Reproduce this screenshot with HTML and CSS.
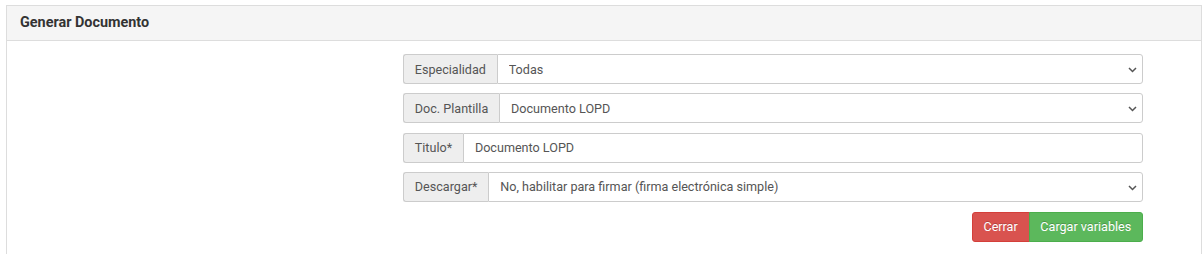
FILE: index.html
```html
<!DOCTYPE html>
<html lang="es">
<head>
    <meta charset="UTF-8">
    <title>Generar Documento</title>
    <link rel="stylesheet" href="styles.css">
</head>
<body>
    <div class="panel">
        <div class="panel-heading">Generar Documento</div>
        <div class="panel-body">
            <form class="doc-form">
                <div class="input-group">
                    <span class="addon">Especialidad</span>
                    <div class="select-wrap">
                        <select class="control">
                            <option>Todas</option>
                        </select>
                        <svg class="chevron" width="9" height="6" viewBox="0 0 9 6"><path d="M1 1l3.5 3.5L8 1" fill="none" stroke="#555" stroke-width="1.5"/></svg>
                    </div>
                </div>
                <div class="input-group">
                    <span class="addon">Doc. Plantilla</span>
                    <div class="select-wrap">
                        <select class="control">
                            <option>Documento LOPD</option>
                        </select>
                        <svg class="chevron" width="9" height="6" viewBox="0 0 9 6"><path d="M1 1l3.5 3.5L8 1" fill="none" stroke="#555" stroke-width="1.5"/></svg>
                    </div>
                </div>
                <div class="input-group">
                    <span class="addon">Titulo*</span>
                    <input class="control" type="text" value="Documento LOPD">
                </div>
                <div class="input-group">
                    <span class="addon">Descargar*</span>
                    <div class="select-wrap">
                        <select class="control">
                            <option>No, habilitar para firmar (firma electrónica simple)</option>
                        </select>
                        <svg class="chevron" width="9" height="6" viewBox="0 0 9 6"><path d="M1 1l3.5 3.5L8 1" fill="none" stroke="#555" stroke-width="1.5"/></svg>
                    </div>
                </div>
                <div class="actions">
                    <button type="button" class="btn btn-danger">Cerrar</button>
                    <button type="button" class="btn btn-success">Cargar variables</button>
                </div>
            </form>
        </div>
    </div>
</body>
</html>
```

FILE: styles.css
```css
* {
    box-sizing: border-box;
}

body {
    margin: 0;
    padding: 5px 1px 0 6px;
    font-family: Roboto, "Liberation Sans", sans-serif;
    font-size: 12.6px;
    color: #555;
    background: #fff;
}

.panel {
    border: 1px solid #ddd;
    border-bottom: none;
    height: 249px;
}

.panel-heading {
    background-color: #f5f5f5;
    border-bottom: 1px solid #ddd;
    color: #333;
    font-size: 14.4px;
    font-weight: bold;
    height: 35px;
    line-height: 34px;
    padding: 0 13px;
}

.panel-body {
    display: flex;
    justify-content: flex-end;
    padding: 13px 58px 0 0;
}

.doc-form {
    width: 740px;
    display: flex;
    flex-direction: column;
    gap: 9.3px;
}

.input-group {
    display: flex;
    height: 30px;
}

.addon {
    display: flex;
    align-items: center;
    padding: 0 10.8px;
    background-color: #eee;
    border: 1px solid #ccc;
    border-right: none;
    border-radius: 3px 0 0 3px;
    white-space: nowrap;
}

.select-wrap {
    position: relative;
    flex: 1;
    display: flex;
}

.control {
    flex: 1;
    width: 100%;
    height: 30px;
    border: 1px solid #ccc;
    border-radius: 0 3px 3px 0;
    background: #fff;
    color: #555;
    font: inherit;
    padding: 0 11px;
    appearance: none;
    -webkit-appearance: none;
    outline: none;
}

.chevron {
    position: absolute;
    right: 6px;
    top: 13px;
    pointer-events: none;
}

.actions {
    display: flex;
    justify-content: flex-end;
    margin-top: 0.5px;
}

.btn {
    height: 30px;
    border: 1px solid transparent;
    color: #fff;
    font: inherit;
    padding: 0 10.8px;
    text-shadow: 0 -1px 0 rgba(0, 0, 0, 0.2);
    cursor: pointer;
}

.btn-danger {
    background-color: #d9534f;
    border-color: #d43f3a;
    border-radius: 3px 0 0 3px;
}

.btn-success {
    background-color: #5cb85c;
    border-color: #4cae4c;
    border-radius: 0 3px 3px 0;
    margin-left: -1px;
}
```
